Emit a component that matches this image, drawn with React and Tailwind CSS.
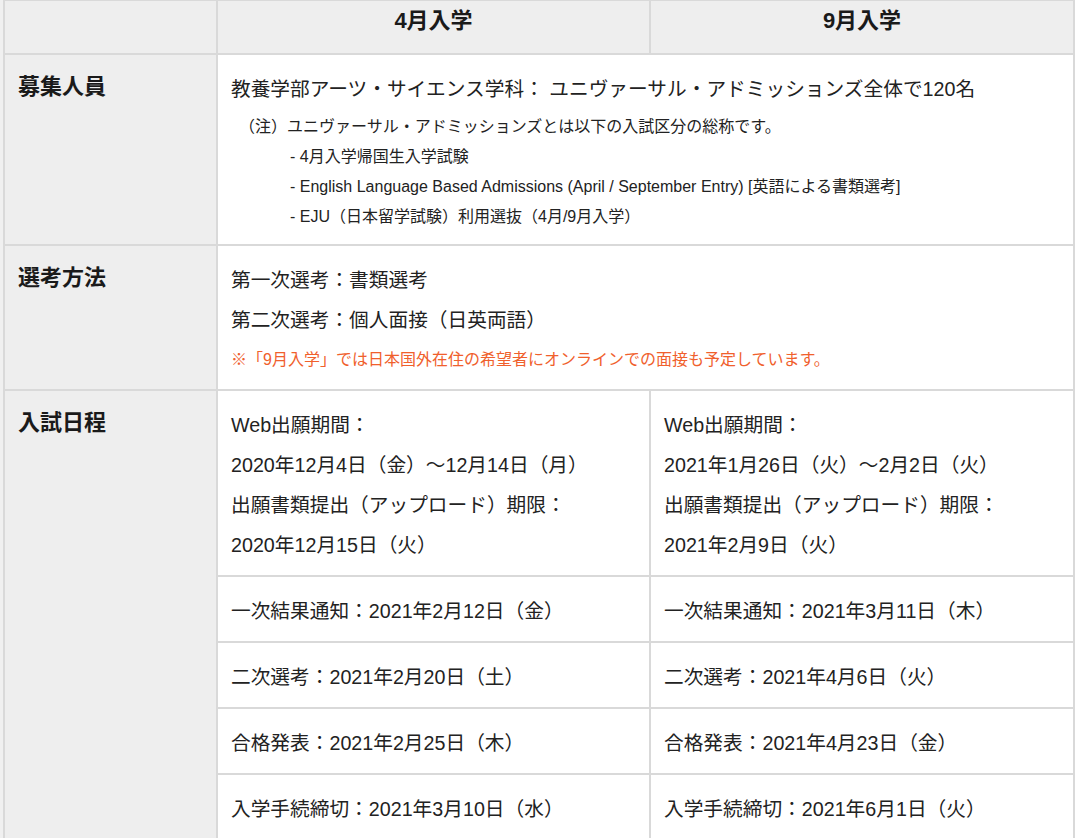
const font = { fontFamily: '"Liberation Sans", "Noto Sans CJK JP", sans-serif' };

const schedule = [
  ["一次結果通知：2021年2月12日（金）", "一次結果通知：2021年3月11日（木）"],
  ["二次選考：2021年2月20日（土）", "二次選考：2021年4月6日（火）"],
  ["合格発表：2021年2月25日（木）", "合格発表：2021年4月23日（金）"],
  ["入学手続締切：2021年3月10日（水）", "入学手続締切：2021年6月1日（火）"],
];

const Label = ({ children, rowSpan }) => (
  <td
    rowSpan={rowSpan}
    className="border-2 border-[#d9d9d9] bg-[#eeeeee] align-top pl-[13px] pt-[12px] text-[22px] font-bold leading-[40px] text-[#1a1a1a]"
  >
    {children}
  </td>
);

const Cell = ({ children, colSpan, className = "" }) => (
  <td
    colSpan={colSpan}
    className={`border-2 border-[#d9d9d9] bg-white align-top pl-[13px] pt-[14px] text-[19.7px] leading-[40px] text-[#222] ${className}`}
  >
    {children}
  </td>
);

const App = () => {
  return (
    <div className="w-[1080px] h-[838px] overflow-hidden bg-white flex" style={font}>
      <div className="w-[3px] bg-[#f0f0f0] shrink-0" />
      <table className="table-fixed border-collapse w-[1072px] -mt-[1px]">
        <colgroup>
          <col className="w-[213px]" />
          <col className="w-[433px]" />
          <col className="w-[424px]" />
        </colgroup>
        <tbody>
          <tr className="h-[54px]">
            <td className="border-2 border-[#d9d9d9] bg-[#eeeeee]" />
            <td className="border-2 border-[#d9d9d9] bg-[#eeeeee] align-top text-center pt-[4px] text-[22px] font-bold leading-[32px] text-[#1a1a1a]">
              4月入学
            </td>
            <td className="border-2 border-[#d9d9d9] bg-[#eeeeee] align-top text-center pt-[4px] text-[22px] font-bold leading-[32px] text-[#1a1a1a]">
              9月入学
            </td>
          </tr>
          <tr className="h-[191px]">
            <Label>募集人員</Label>
            <Cell colSpan={2}>
              <div>教養学部アーツ・サイエンス学科： ユニヴァーサル・アドミッションズ全体で120名</div>
              <div className="pt-[3px] text-[16px] leading-[30px]">
                <div className="pl-[8px]">（注）ユニヴァーサル・アドミッションズとは以下の入試区分の総称です。</div>
                <div className="pl-[59px]">- 4月入学帰国生入学試験</div>
                <div className="pl-[59px]">
                  - English Language Based Admissions (April / September Entry) [英語による書類選考]
                </div>
                <div className="pl-[59px]">- EJU（日本留学試験）利用選抜（4月/9月入学）</div>
              </div>
            </Cell>
          </tr>
          <tr className="h-[145px]">
            <Label>選考方法</Label>
            <Cell colSpan={2}>
              <div>第一次選考：書類選考</div>
              <div>第二次選考：個人面接（日英両語）</div>
              <div className="text-[16px] text-[#f0602c]">
                ※「9月入学」では日本国外在住の希望者にオンラインでの面接も予定しています。
              </div>
            </Cell>
          </tr>
          <tr className="h-[186px]">
            <Label rowSpan={5}>入試日程</Label>
            <Cell>
              <div>Web出願期間：</div>
              <div>2020年12月4日（金）〜12月14日（月）</div>
              <div>出願書類提出（アップロード）期限：</div>
              <div>2020年12月15日（火）</div>
            </Cell>
            <Cell>
              <div>Web出願期間：</div>
              <div>2021年1月26日（火）〜2月2日（火）</div>
              <div>出願書類提出（アップロード）期限：</div>
              <div>2021年2月9日（火）</div>
            </Cell>
          </tr>
          {schedule.map(([a, b]) => (
            <tr key={a} className="h-[66px]">
              <Cell className="pt-[13px]">{a}</Cell>
              <Cell className="pt-[13px]">{b}</Cell>
            </tr>
          ))}
        </tbody>
      </table>
    </div>
  );
};

export default App;
